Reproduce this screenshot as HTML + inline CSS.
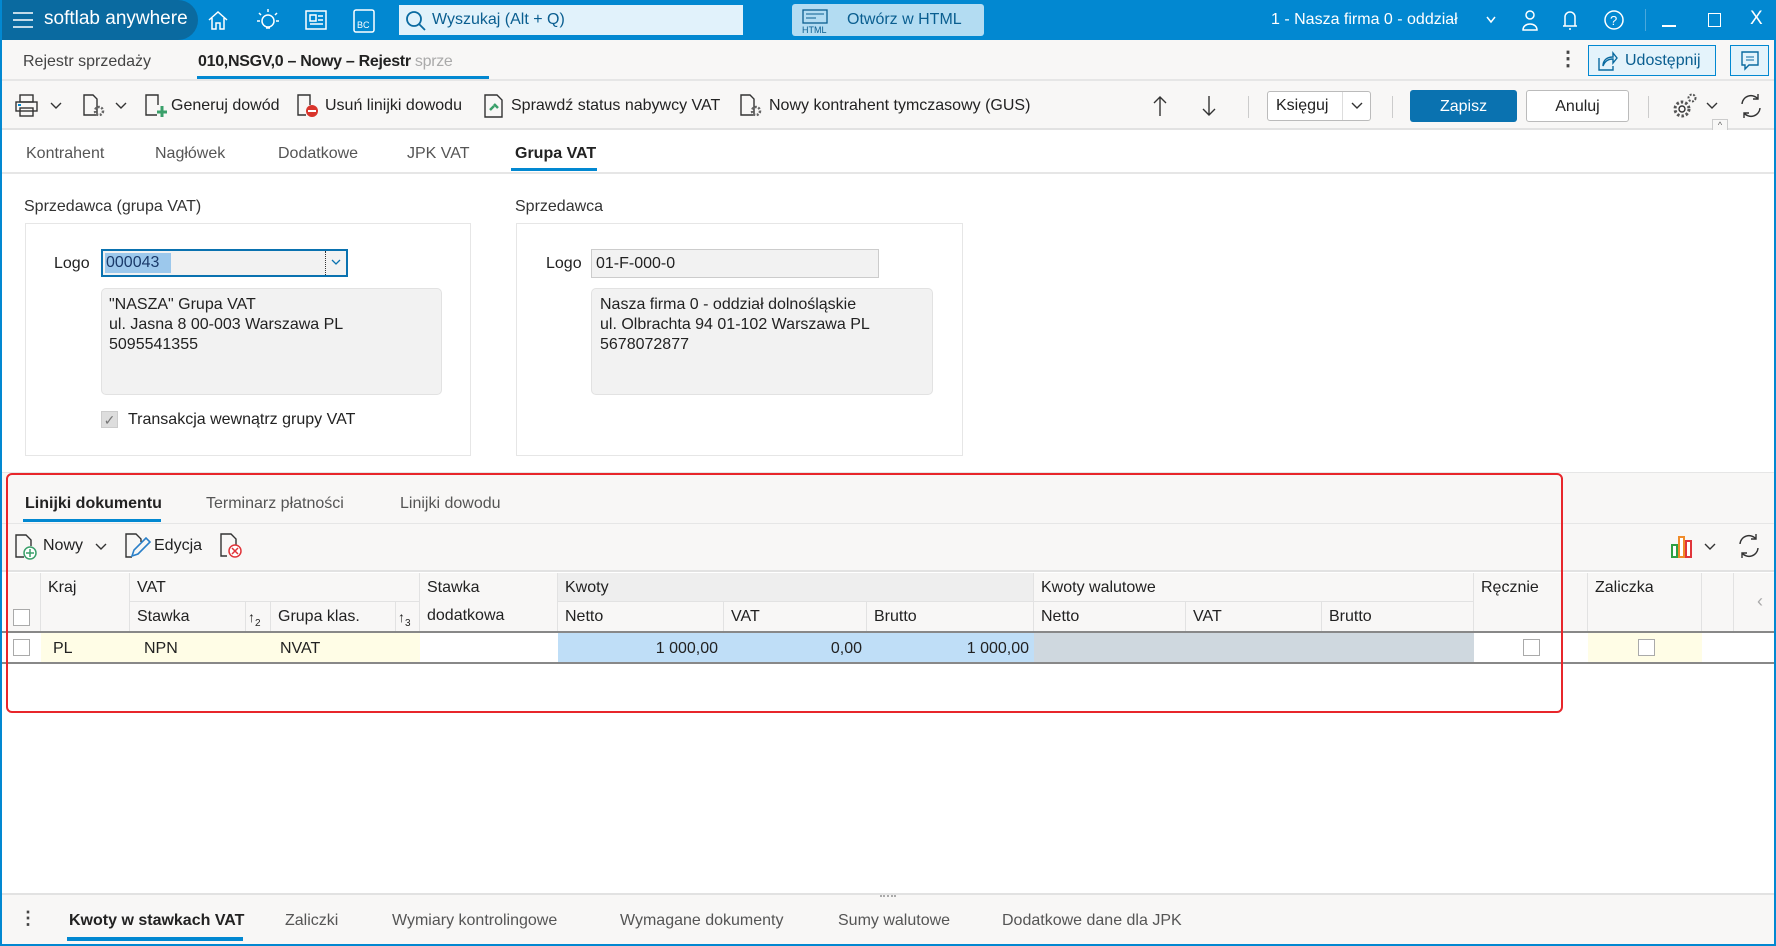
<!DOCTYPE html>
<html><head><meta charset="utf-8">
<style>
*{box-sizing:border-box;margin:0;padding:0}
body{width:1776px;height:946px;overflow:hidden;background:#fff;font-family:"Liberation Sans",sans-serif;font-size:16px;line-height:22px;color:#222;position:relative}
.a{position:absolute;white-space:nowrap}
.top{left:0;top:0;width:1776px;height:40px;background:#0288d1}
.brand{left:0;top:0;width:198px;height:40px;background:#0a6aa0;border-radius:0 20px 20px 0}
.w{color:#fff}
.ico{stroke:#333;fill:none;stroke-width:1.4}
.wi{stroke:#fff;fill:none;stroke-width:1.5}
.gl{color:#555}
.cell{position:absolute;border-right:1px solid #e2e2e2;border-bottom:1px solid #e2e2e2;padding:3px 7px;font-size:16px;color:#222}
.cb{position:absolute;width:17px;height:17px;border:1px solid #aaa;background:#fff}
</style></head><body>
<!-- top bar -->
<div class="a top"></div>
<div class="a brand"></div>
<svg class="a" style="left:12px;top:10px" width="22" height="20"><path d="M1 3h20M1 10h20M1 17h20" class="wi" stroke-width="2"/></svg>
<div class="a w" style="left:44px;top:8px;font-size:19px">softlab anywhere</div>
<svg class="a" style="left:207px;top:9px" width="22" height="22"><path d="M2 11L11 3l9 8M5 9v11h4v-6h4v6h4V9" class="wi"/></svg>
<svg class="a" style="left:255px;top:7px" width="26" height="26"><circle cx="13" cy="14" r="6" class="wi"/><path d="M13 2v3M4 6l2 2M22 6l-2 2M2 14h3M21 14h3M11 21h4" class="wi"/></svg>
<svg class="a" style="left:304px;top:9px" width="24" height="22"><rect x="2" y="2" width="20" height="18" class="wi"/><path d="M6 6h6v6H6zM14 7h5M14 11h5M6 15h13" class="wi"/></svg>
<svg class="a" style="left:352px;top:8px" width="24" height="26"><rect x="2" y="2" width="20" height="22" rx="2" class="wi"/><text x="5" y="20" fill="#fff" font-size="9" font-family="Liberation Sans">BC</text></svg>
<div class="a" style="left:399px;top:5px;width:344px;height:30px;background:#e1f2fb"></div>
<svg class="a" style="left:405px;top:10px" width="22" height="22"><circle cx="9" cy="9" r="7" fill="none" stroke="#0a6aa0" stroke-width="1.8"/><path d="M14 14l6 6" stroke="#0a6aa0" stroke-width="1.8"/></svg>
<div class="a" style="left:432px;top:9px;color:#0a5e90;font-size:16px">Wyszukaj (Alt + Q)</div>
<div class="a" style="left:792px;top:4px;width:192px;height:32px;background:#b3dcf2;border-radius:3px"></div>
<svg class="a" style="left:800px;top:9px" width="30" height="26"><rect x="3" y="1" width="24" height="13" fill="none" stroke="#0a5e90" stroke-width="1.3"/><path d="M6 5h18M6 9h10" stroke="#0a5e90"/><text x="2" y="24" fill="#0a5e90" font-size="9" font-family="Liberation Sans">HTML</text></svg>
<div class="a" style="left:847px;top:9px;color:#0a5e90;font-size:16px">Otwórz w HTML</div>
<div class="a w" style="left:1271px;top:9px;font-size:16px">1 - Nasza firma 0 - oddział</div>
<svg class="a" style="left:1485px;top:15px" width="12" height="10"><path d="M2 2l4 5 4-5" class="wi" stroke-width="2"/></svg>
<svg class="a" style="left:1520px;top:8px" width="20" height="24"><circle cx="10" cy="7" r="4" class="wi"/><path d="M3 22c0-8 14-8 14 0z" class="wi"/></svg>
<svg class="a" style="left:1560px;top:8px" width="20" height="24"><path d="M5 18V9a5 5 0 0110 0v9zM3 18h14M10 20v2" class="wi"/></svg>
<svg class="a" style="left:1603px;top:9px" width="22" height="22"><circle cx="11" cy="11" r="9" class="wi"/><text x="7" y="16" fill="#fff" font-size="13" font-family="Liberation Sans">?</text></svg>
<div class="a" style="left:1645px;top:9px;width:1px;height:22px;background:#4aa8dc"></div>
<div class="a" style="left:1662px;top:25px;width:14px;height:2px;background:#fff"></div>
<div class="a" style="left:1708px;top:13px;width:13px;height:14px;border:1.5px solid #fff"></div>
<div class="a w" style="left:1750px;top:8px;font-size:19px">X</div>
<!-- tab row -->
<div class="a" style="left:0;top:40px;width:1776px;height:41px;background:#f8f7f6;border-bottom:2px solid #e6e6e6"></div>
<div class="a" style="left:23px;top:51px;color:#444">Rejestr sprzedaży</div>
<div class="a" style="left:198px;top:51px;font-weight:bold;color:#222;letter-spacing:-0.3px">010,NSGV,0 – Nowy – Rejestr <span style="color:#aaa;font-weight:normal">sprze</span></div>
<div class="a" style="left:197px;top:76px;width:292px;height:3px;background:#0288d1"></div>
<div class="a" style="left:1558px;top:48px;font-size:20px;font-weight:bold;color:#444">⋮</div>
<div class="a" style="left:1588px;top:45px;width:128px;height:31px;border:1.5px solid #0288d1;background:#e4f3fb"></div>
<svg class="a" style="left:1596px;top:50px" width="22" height="22"><path d="M3 8v12h14v-4" fill="none" stroke="#0a6aa0" stroke-width="1.4"/><path d="M7 16c0-6 4-9 10-9V3l4 5-4 5V9c-5 0-8 2-10 7z" fill="none" stroke="#0a6aa0" stroke-width="1.4"/></svg>
<div class="a" style="left:1625px;top:50px;color:#0a5e90">Udostępnij</div>
<div class="a" style="left:1730px;top:45px;width:39px;height:31px;border:1.5px solid #0288d1;background:#e4f3fb"></div>
<svg class="a" style="left:1739px;top:50px" width="22" height="22"><path d="M3 2h16v13h-9l-4 4v-4H3z" fill="none" stroke="#0a6aa0" stroke-width="1.4"/><path d="M7 7h8M7 10h8" stroke="#0a6aa0"/></svg>
<!-- toolbar -->
<div class="a" style="left:0;top:81px;width:1776px;height:49px;background:#f8f7f6;border-bottom:2px solid #e2e2e2"></div>
<svg class="a" style="left:14px;top:93px" width="26" height="26"><rect x="6" y="2" width="13" height="7" class="ico"/><rect x="2" y="9" width="21" height="9" class="ico"/><rect x="6" y="15" width="13" height="8" class="ico"/><path d="M4 12h3" stroke="#0288d1" stroke-width="2"/></svg>
<svg class="a" style="left:50px;top:102px" width="12" height="8"><path d="M1 1l5 5 5-5" class="ico"/></svg>
<svg class="a" style="left:82px;top:93px" width="26" height="26"><path d="M2 2h9l4 4v16H2z" class="ico"/><circle cx="17" cy="18" r="4" fill="none" stroke="#666" stroke-width="2.5" stroke-dasharray="2 1.5"/></svg>
<svg class="a" style="left:115px;top:102px" width="12" height="8"><path d="M1 1l5 5 5-5" class="ico"/></svg>
<svg class="a" style="left:144px;top:93px" width="26" height="26"><path d="M13 22H2V2h12v10" class="ico"/><path d="M18 13v11M13 19h10" stroke="#3aa06a" stroke-width="3"/></svg>
<div class="a" style="left:171px;top:95px">Generuj dowód</div>
<svg class="a" style="left:296px;top:93px" width="26" height="26"><path d="M10 22H2V2h12v10" class="ico"/><circle cx="16" cy="18" r="6" fill="#d9342b"/><path d="M12 18h8" stroke="#fff" stroke-width="2"/></svg>
<div class="a" style="left:325px;top:95px">Usuń linijki dowodu</div>
<svg class="a" style="left:483px;top:93px" width="24" height="26"><path d="M2 2h12l5 5v17H2z" class="ico"/><path d="M7 17l4-4M11 11l4 4" stroke="#3aa06a" stroke-width="2.5"/></svg>
<div class="a" style="left:511px;top:95px">Sprawdź status nabywcy VAT</div>
<svg class="a" style="left:739px;top:93px" width="26" height="26"><path d="M2 2h9l4 4v16H2z" class="ico"/><circle cx="17" cy="18" r="4" fill="none" stroke="#666" stroke-width="2.5" stroke-dasharray="2 1.5"/></svg>
<div class="a" style="left:769px;top:95px">Nowy kontrahent tymczasowy (GUS)</div>
<svg class="a" style="left:1152px;top:94px" width="16" height="24"><path d="M8 22V3M2 9l6-6 6 6" class="ico"/></svg>
<svg class="a" style="left:1201px;top:94px" width="16" height="24"><path d="M8 2v19M2 15l6 6 6-6" class="ico"/></svg>
<div class="a" style="left:1248px;top:96px;width:1px;height:22px;background:#ccc"></div>
<div class="a" style="left:1267px;top:91px;width:104px;height:30px;border:1px solid #bbb;border-radius:3px;background:#fff"></div>
<div class="a" style="left:1276px;top:95px">Księguj</div>
<div class="a" style="left:1342px;top:92px;width:1px;height:28px;background:#ddd"></div>
<svg class="a" style="left:1351px;top:102px" width="12" height="8"><path d="M1 1l5 5 5-5" class="ico"/></svg>
<div class="a" style="left:1392px;top:96px;width:1px;height:22px;background:#ccc"></div>
<div class="a" style="left:1410px;top:90px;width:107px;height:32px;background:#0a72b0;border-radius:3px;color:#fff;text-align:center;line-height:33px">Zapisz</div>
<div class="a" style="left:1526px;top:90px;width:103px;height:32px;background:#fff;border:1px solid #bbb;border-radius:3px;text-align:center;line-height:31px">Anuluj</div>
<div class="a" style="left:1648px;top:96px;width:1px;height:22px;background:#ccc"></div>
<svg class="a" style="left:1670px;top:92px" width="30" height="28"><circle cx="12" cy="17" r="7" fill="none" stroke="#555" stroke-width="3" stroke-dasharray="2.5 2"/><circle cx="12" cy="17" r="3" class="ico"/><circle cx="22" cy="6" r="3.5" fill="none" stroke="#555" stroke-width="2" stroke-dasharray="2 1.5"/></svg>
<svg class="a" style="left:1706px;top:102px" width="12" height="8"><path d="M1 1l5 5 5-5" class="ico"/></svg>
<svg class="a" style="left:1737px;top:92px" width="28" height="28"><path d="M5 12a9 9 0 0116-5M23 16a9 9 0 01-16 5M21 2v5h-5M7 26v-5h5" class="ico"/></svg>
<div class="a" style="left:1712px;top:119px;width:16px;height:11px;border:1px solid #ccc;border-bottom:none;font-size:9px;line-height:10px;color:#666;text-align:center;background:#f8f7f6">^</div>
<!-- tabs -->
<div class="a" style="left:0;top:172px;width:1776px;height:2px;background:#e6e6e6"></div>
<div class="a gl" style="left:26px;top:143px">Kontrahent</div>
<div class="a gl" style="left:155px;top:143px">Nagłówek</div>
<div class="a gl" style="left:278px;top:143px">Dodatkowe</div>
<div class="a gl" style="left:407px;top:143px">JPK VAT</div>
<div class="a" style="left:515px;top:143px;font-weight:bold">Grupa VAT</div>
<div class="a" style="left:511px;top:168px;width:86px;height:3px;background:#0288d1"></div>
<!-- form -->
<div class="a" style="left:24px;top:196px;color:#333">Sprzedawca (grupa VAT)</div>
<div class="a" style="left:515px;top:196px;color:#333">Sprzedawca</div>
<div class="a" style="left:25px;top:223px;width:446px;height:233px;border:1px solid #e6e6e6"></div>
<div class="a" style="left:516px;top:223px;width:447px;height:233px;border:1px solid #e6e6e6"></div>
<div class="a" style="left:54px;top:253px">Logo</div>
<div class="a" style="left:101px;top:249px;width:247px;height:28px;border:2px solid #0a72b0;background:#f2f2f2"></div>
<div class="a" style="left:105px;top:253px;width:66px;height:20px;background:#9cc8ec"></div>
<div class="a" style="left:106px;top:252px;color:#1a3a6a">000043</div>
<div class="a" style="left:325px;top:251px;width:0;height:24px;border-left:1px dotted #333"></div>
<svg class="a" style="left:331px;top:259px" width="10" height="7"><path d="M1 1l4 4 4-4" fill="none" stroke="#0a72b0" stroke-width="1.3"/></svg>
<div class="a" style="left:101px;top:288px;width:341px;height:107px;background:#f2f2f2;border:1px solid #e2e2e2;border-radius:5px"></div>
<div class="a" style="left:109px;top:295px;line-height:20px;font-size:16px">"NASZA" Grupa VAT<br>ul. Jasna 8 00-003 Warszawa PL<br>5095541355</div>
<div class="a" style="left:101px;top:411px;width:17px;height:17px;background:#ddd;border:1px solid #ccc;color:#777;font-size:14px;text-align:center;line-height:16px">✓</div>
<div class="a" style="left:128px;top:409px">Transakcja wewnątrz grupy VAT</div>
<div class="a" style="left:546px;top:253px">Logo</div>
<div class="a" style="left:591px;top:249px;width:288px;height:29px;border:1px solid #ccc;background:#f2f2f2"></div>
<div class="a" style="left:596px;top:253px">01-F-000-0</div>
<div class="a" style="left:591px;top:288px;width:342px;height:107px;background:#f2f2f2;border:1px solid #e2e2e2;border-radius:5px"></div>
<div class="a" style="left:600px;top:295px;line-height:20px">Nasza firma 0 - oddział dolnośląskie<br>ul. Olbrachta 94 01-102 Warszawa PL<br>5678072877</div>
<!-- lower section -->
<div class="a" style="left:0;top:472px;width:1776px;height:417px;background:#fff"></div>
<div class="a" style="left:0;top:472px;width:1776px;height:52px;background:#f8f7f6;border-top:1px solid #e6e6e6;border-bottom:1px solid #e6e6e6"></div>
<div class="a" style="left:25px;top:493px;font-weight:bold;font-size:16px">Linijki dokumentu</div>
<div class="a" style="left:23px;top:519px;width:138px;height:3px;background:#0288d1"></div>
<div class="a gl" style="left:206px;top:493px">Terminarz płatności</div>
<div class="a gl" style="left:400px;top:493px">Linijki dowodu</div>
<div class="a" style="left:0;top:524px;width:1776px;height:48px;background:#f8f7f6;border-bottom:2px solid #e2e2e2"></div>
<svg class="a" style="left:14px;top:533px" width="26" height="28"><path d="M10 24H2V2h10l5 5v6" class="ico"/><circle cx="16" cy="20" r="6" fill="#fff" stroke="#3aa06a" stroke-width="1.5"/><path d="M16 16v8M12 20h8" stroke="#3aa06a" stroke-width="1.5"/></svg>
<div class="a" style="left:43px;top:535px">Nowy</div>
<svg class="a" style="left:95px;top:543px" width="12" height="8"><path d="M1 1l5 5 5-5" class="ico"/></svg>
<svg class="a" style="left:124px;top:532px" width="28" height="28"><path d="M8 25H2V2h10l5 5v3" class="ico"/><path d="M8 24l2-6 12-12 4 4-12 12z" fill="none" stroke="#2a7fc8" stroke-width="1.6"/></svg>
<div class="a" style="left:154px;top:535px">Edycja</div>
<svg class="a" style="left:219px;top:532px" width="26" height="28"><path d="M8 24H2V2h10l5 5v6" class="ico"/><circle cx="16" cy="19" r="6" fill="#fff" stroke="#e0353a" stroke-width="1.5"/><path d="M13 16l6 6M19 16l-6 6" stroke="#e0353a" stroke-width="1.5"/></svg>
<svg class="a" style="left:1670px;top:533px" width="26" height="26"><rect x="2" y="12" width="5" height="12" fill="#fff" stroke="#2ea043" stroke-width="2"/><rect x="9" y="4" width="5" height="20" fill="#fff" stroke="#f08c2a" stroke-width="2"/><rect x="16" y="8" width="5" height="16" fill="#fff" stroke="#e0353a" stroke-width="2"/></svg>
<svg class="a" style="left:1704px;top:543px" width="12" height="8"><path d="M1 1l5 5 5-5" class="ico"/></svg>
<svg class="a" style="left:1735px;top:532px" width="28" height="28"><path d="M5 12a9 9 0 0116-5M23 16a9 9 0 01-16 5M21 2v5h-5M7 26v-5h5" class="ico"/></svg>
<!-- grid header -->
<div class="a" style="left:6px;top:573px;width:1770px;height:59px;background:#f8f7f6"></div>
<div class="cell" style="left:6px;top:573px;width:35px;height:59px"></div>
<div class="cb" style="left:13px;top:609px"></div>
<div class="cell" style="left:41px;top:573px;width:89px;height:59px;padding-top:4px">Kraj</div>
<div class="cell" style="left:130px;top:573px;width:290px;height:29px;padding-top:4px">VAT</div>
<div class="cell" style="left:130px;top:602px;width:116px;height:30px;padding-top:4px">Stawka</div>
<div class="cell" style="left:246px;top:602px;width:25px;height:30px;padding:4px 2px;font-size:14px">↑<sub style="font-size:10px">2</sub></div>
<div class="cell" style="left:271px;top:602px;width:125px;height:30px;padding-top:4px">Grupa klas.</div>
<div class="cell" style="left:396px;top:602px;width:24px;height:30px;padding:4px 2px;font-size:14px">↑<sub style="font-size:10px">3</sub></div>
<div class="cell" style="left:420px;top:573px;width:138px;height:59px;line-height:28px;padding-top:1px">Stawka<br>dodatkowa</div>
<div class="cell" style="left:558px;top:573px;width:476px;height:29px;background:#eeeeee;padding-top:4px">Kwoty</div>
<div class="cell" style="left:558px;top:602px;width:166px;height:30px;padding-top:4px">Netto</div>
<div class="cell" style="left:724px;top:602px;width:143px;height:30px;padding-top:4px">VAT</div>
<div class="cell" style="left:867px;top:602px;width:167px;height:30px;padding-top:4px">Brutto</div>
<div class="cell" style="left:1034px;top:573px;width:440px;height:29px;padding-top:4px">Kwoty walutowe</div>
<div class="cell" style="left:1034px;top:602px;width:152px;height:30px;padding-top:4px">Netto</div>
<div class="cell" style="left:1186px;top:602px;width:136px;height:30px;padding-top:4px">VAT</div>
<div class="cell" style="left:1322px;top:602px;width:152px;height:30px;padding-top:4px">Brutto</div>
<div class="cell" style="left:1474px;top:573px;width:114px;height:59px;padding-top:4px">Ręcznie</div>
<div class="cell" style="left:1588px;top:573px;width:114px;height:59px;padding-top:4px">Zaliczka</div>
<div class="cell" style="left:1702px;top:573px;width:32px;height:59px"></div>
<div class="a" style="left:1757px;top:590px;color:#aaa;font-size:18px">‹</div>
<div class="a" style="left:0;top:631px;width:1776px;height:2px;background:#888"></div>
<div class="a" style="left:0;top:633px;width:2px;height:30px;background:#0a6aa0"></div>
<!-- data row -->
<div class="a" style="left:41px;top:633px;width:379px;height:30px;background:#fffde6"></div>
<div class="cb" style="left:13px;top:639px"></div>
<div class="a" style="left:53px;top:638px">PL</div>
<div class="a" style="left:144px;top:638px">NPN</div>
<div class="a" style="left:280px;top:638px">NVAT</div>
<div class="a" style="left:558px;top:633px;width:476px;height:30px;background:#bfdef7"></div>
<div class="a" style="left:558px;top:638px;width:160px;text-align:right">1 000,00</div>
<div class="a" style="left:724px;top:638px;width:138px;text-align:right">0,00</div>
<div class="a" style="left:867px;top:638px;width:162px;text-align:right">1 000,00</div>
<div class="a" style="left:1034px;top:633px;width:440px;height:30px;background:#cfd8df"></div>
<div class="cb" style="left:1523px;top:639px"></div>
<div class="a" style="left:1588px;top:633px;width:114px;height:30px;background:#fffde6"></div>
<div class="cb" style="left:1638px;top:639px"></div>
<div class="a" style="left:0;top:662px;width:1776px;height:2px;background:#888"></div>
<!-- red highlight -->
<div class="a" style="left:6px;top:473px;width:1557px;height:240px;border:2px solid #e8262b;border-radius:6px"></div>
<!-- bottom -->
<div class="a" style="left:0;top:893px;width:1776px;height:53px;background:#f8f7f6;border-top:2px solid #e2e2e2"></div>
<div class="a" style="left:880px;top:895px;width:16px;height:3px;border-top:2px dotted #aaa"></div>
<div class="a" style="left:19px;top:907px;font-size:18px;font-weight:bold;color:#444">⋮</div>
<div class="a" style="left:69px;top:910px;font-weight:bold">Kwoty w stawkach VAT</div>
<div class="a" style="left:67px;top:937px;width:176px;height:4px;background:#0288d1"></div>
<div class="a gl" style="left:285px;top:910px">Zaliczki</div>
<div class="a gl" style="left:392px;top:910px">Wymiary kontrolingowe</div>
<div class="a gl" style="left:620px;top:910px">Wymagane dokumenty</div>
<div class="a gl" style="left:838px;top:910px">Sumy walutowe</div>
<div class="a gl" style="left:1002px;top:910px">Dodatkowe dane dla JPK</div>
<!-- window borders -->
<div class="a" style="left:0;top:0;width:2px;height:946px;background:#0288d1"></div>
<div class="a" style="left:1774px;top:0;width:2px;height:946px;background:#0288d1"></div>
<div class="a" style="left:0;top:944px;width:1776px;height:2px;background:#0288d1"></div>
</body></html>
